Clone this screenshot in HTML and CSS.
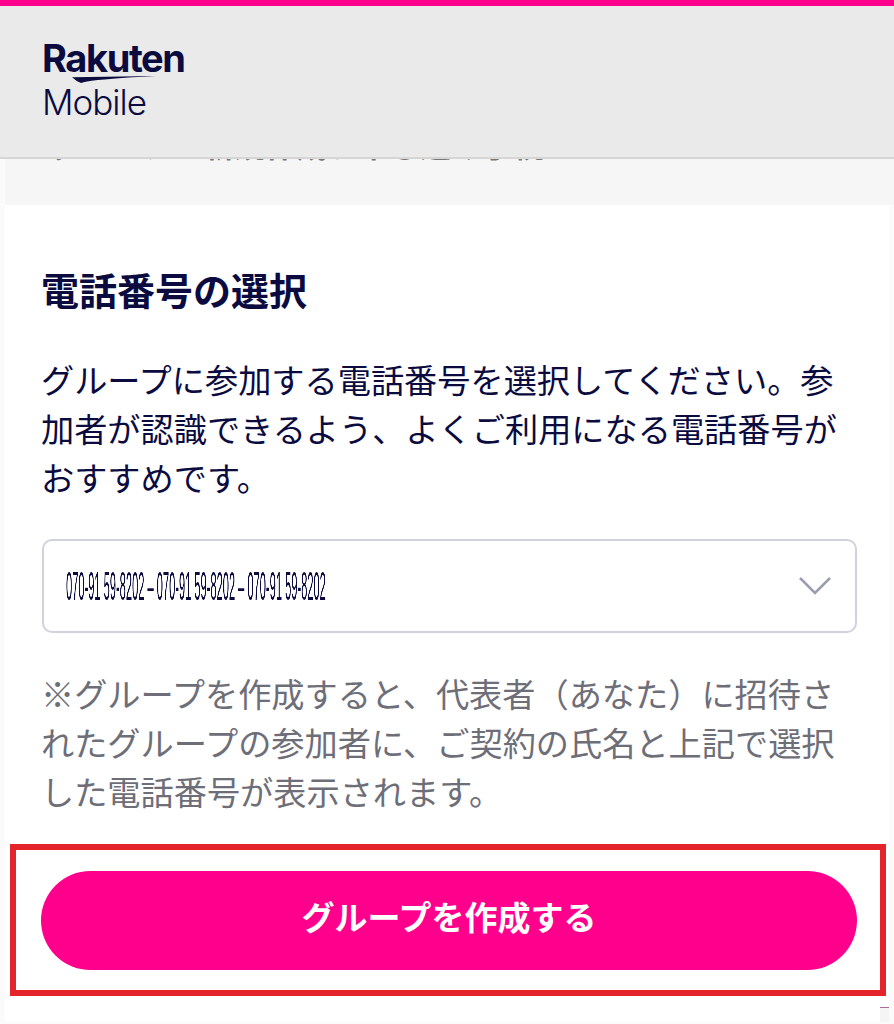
FILE: index.html

```html
<!DOCTYPE html>
<html lang="ja">
<head>
  <meta charset="UTF-8" />
  <title>グループを作成する</title>
  <link rel="stylesheet" href="styles.css">
</head>
<body>

<header class="cabecalho">
  <div class="logo">
    <span class="logo-rakuten">Rakuten</span>
    <svg class="logo-swoosh" viewBox="0 0 84 7" aria-hidden="true">
      <path d="M0 1.2 L84 0 Q32 2.6 15 5.6 Q11 6.2 9 7 Q4 5 0 1.2 Z" />
    </svg>
    <span class="logo-mobile">Mobile</span>
  </div>
</header>

<div class="faixa">
  <h1>グループの新規作成お申し込み手続</h1>
</div>

<main class="cartao">
  <section class="conteudo">
    <h2>電話番号の選択</h2>
    <p class="texto">グループに参加する電話番号を選択してください。参加者が認識できるよう、よくご利用になる電話番号がおすすめです。</p>

    <div class="seletor">
      <span class="numero">070-91 59-8202 – 070-91 59-8202 – 070-91 59-8202</span>
      <svg class="seta" viewBox="0 0 32 18" aria-hidden="true">
        <path d="M1 1 L16 16 L31 1" />
      </svg>
    </div>

    <p class="texto nota">※グループを作成すると、代表者（あなた）に招待されたグループの参加者に、ご契約の氏名と上記で選択した電話番号が表示されます。</p>
  </section>

  <div class="destaque">
    <button class="botao" type="button">グループを作成する</button>
  </div>

  <div class="rodape"><span class="rodape-marca"></span></div>
</main>

</body>
</html>
```

FILE: styles.css

```css
html, body {
  margin: 0;
  padding: 0;
}
body {
  background-color: #fbfbfb;
  color: #0b0b3f;
  font-family: "Noto Sans CJK JP", "Noto Sans", sans-serif;
  height: 1024px;
  overflow: hidden;
}
.cabecalho {
  position: relative;
  z-index: 2;
  height: 151px;
  background-color: #eaeaea;
  border-top: 6px solid #ff008c;
  border-bottom: 2px solid #d6d6d6;
  padding-left: 42px;
}
.logo {
  display: flex;
  flex-direction: column;
  align-items: flex-start;
  padding-top: 33px;
  color: #0b0b3f;
  font-family: Inter, "Noto Sans", sans-serif;
  line-height: 1;
}
.logo-rakuten {
  font-size: 38px;
  font-weight: 700;
  letter-spacing: -1.4px;
  height: 38px;
}
.logo-swoosh {
  width: 84px;
  height: 7px;
  margin-left: 30px;
  margin-top: -1px;
  fill: #0b0b3f;
}
.logo-mobile {
  font-size: 35px;
  font-weight: 300;
  letter-spacing: -1px;
  margin-top: 2px;
}
.faixa {
  height: 46px;
  margin-left: 5px;
  background-color: #f6f6f6;
  overflow: hidden;
}
.faixa h1 {
  margin: -43px 0 0 45px;
  font-size: 31px;
  line-height: 55px;
  font-weight: 700;
  color: #777;
  white-space: nowrap;
}
.cartao {
  margin: 0 5px 0 5px;
  background-color: #fff;
}
.conteudo {
  padding: 0 32px 0 36px;
}
h2 {
  margin: 0;
  padding-top: 60px;
  font-size: 38px;
  line-height: 48px;
  font-weight: 700;
}
.texto {
  margin: 0;
  font-size: 33.2px;
  line-height: 49px;
}
h2 + .texto {
  margin-top: 41px;
}
.seletor {
  display: flex;
  align-items: center;
  justify-content: space-between;
  box-sizing: border-box;
  height: 94px;
  margin-top: 38px;
  margin-left: 1px;
  padding: 0 24px 0 22px;
  background-color: #fff;
  border: 2px solid #d2d2de;
  border-radius: 10px;
  overflow: hidden;
}
.numero {
  width: 0;
  font-family: "Liberation Sans", sans-serif;
  font-size: 40px;
  font-weight: 400;
  white-space: nowrap;
  transform: scaleX(0.2775);
  transform-origin: left center;
  will-change: transform;
}
.seta {
  flex: none;
  width: 32px;
  height: 18px;
  fill: none;
  stroke: #9c9cb0;
  stroke-width: 2.5;
}
.nota {
  margin-top: 35px;
  color: #6e6e78;
}
.destaque {
  box-sizing: border-box;
  width: 876px;
  height: 152px;
  margin: 29px 0 0 5px;
  padding: 21px 23px 20px 25px;
  border: 6px solid #e3242b;
}
.botao {
  display: block;
  width: 100%;
  height: 99px;
  border: 0;
  border-radius: 50px;
  padding: 0 0 9px;
  background-color: #ff008c;
  color: #fff;
  font-family: inherit;
  font-size: 33px;
  font-weight: 700;
}
.rodape {
  display: flex;
  justify-content: flex-end;
  margin-top: 11px;
}
.rodape-marca {
  width: 9px;
  height: 14px;
  background-color: #f5f5f5;
  border-top: 1px solid #b06aa0;
}
```
